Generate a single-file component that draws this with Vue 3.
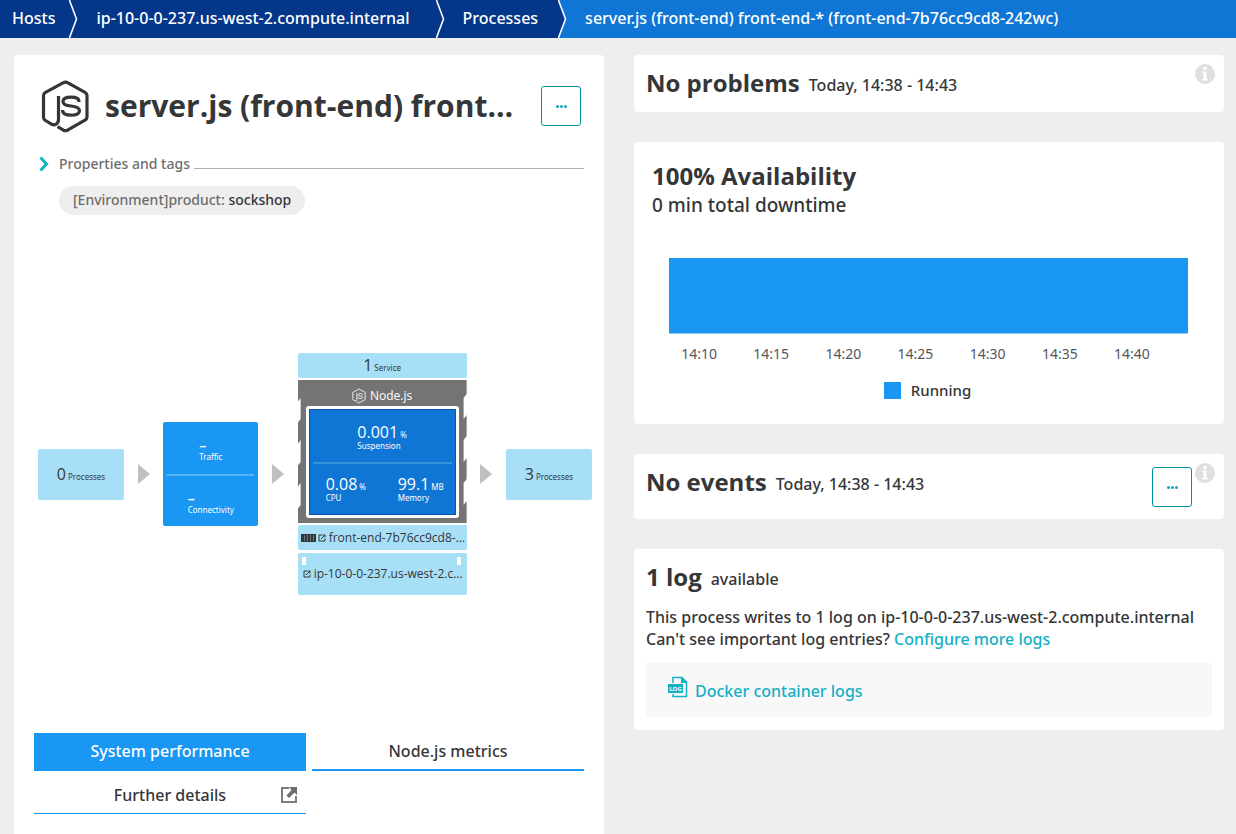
<script setup>
const crumbs = ['Hosts', 'ip-10-0-0-237.us-west-2.compute.internal', 'Processes']
const current = 'server.js (front-end) front-end-* (front-end-7b76cc9cd8-242wc)'
const ticks = ['14:10', '14:15', '14:20', '14:25', '14:30', '14:35', '14:40']
</script>

<template>
  <div class="page">
    <nav class="crumbs" aria-label="Breadcrumb">
      <a v-for="c in crumbs" :key="c" class="crumb" href="#">
        <span class="crumb-text">{{ c }}</span>
        <svg class="sep" width="9" height="38" viewBox="0 0 9 38">
          <path d="M0 0L8 19L0 38H9V0Z" class="sep-next" />
          <path d="M0 -1L7.500 19L0 39" fill="none" stroke="#fff" stroke-width="1.600" />
        </svg>
      </a>
      <span class="crumb-current" aria-current="page">{{ current }}</span>
    </nav>

    <main class="columns">
      <section class="panel">
        <header class="title-row">
          <svg class="logo" width="50" height="54" viewBox="0 0 50 54" fill="none" stroke="#353638" stroke-linejoin="round">
            <path d="M17.500 17V40.500Q17.500 44 14.500 45.500Q12.500 46.300 10 44.800L4.500 41.500Q2.500 40.500 2.500 38.500V16.500Q2.500 14.500 4.500 13.300L22 3.800Q24.500 2.500 27 3.800L44 13.300Q46 14.500 46 16.500V38Q46 40 44 41.200L26.500 51.200Q24.500 52.200 22.500 51.200L16.500 47.600" stroke-width="3.200" />
            <path d="M38 23V22.500Q38 18.200 30 18.200Q22 18.200 22 22.500Q22 26.300 30 27Q38.500 27.800 38.500 31.800Q38.500 36.200 30 36.200Q21.500 36.200 21.500 31" stroke-width="3.200" />
          </svg>
          <h1>server.js (front-end) front-end-* (front-end-7b76cc9cd8-242wc)</h1>
          <button class="more" type="button" aria-label="More actions"><i></i><i></i><i></i></button>
        </header>

        <button class="props" type="button">
          <svg width="10" height="16" viewBox="0 0 10 16"><path d="M1.500 1.500L7.500 8L1.500 14.500" fill="none" stroke="#14b0c4" stroke-width="3" /></svg>
          <span>Properties and tags</span>
          <i class="rule"></i>
        </button>
        <div class="tag"><span>[Environment]product: </span>sockshop</div>

        <div class="flow">
          <a class="node side" href="#"><b>0</b> Processes</a>
          <i class="arrow"></i>
          <div class="node traffic">
            <div class="cell"><span class="dash">–</span><span>Traffic</span></div>
            <div class="cell"><span class="dash">–</span><span>Connectivity</span></div>
          </div>
          <i class="arrow"></i>
          <div class="stack">
            <a class="node service" href="#"><b>1</b> Service</a>
            <div class="process">
              <div class="tech">
                <svg width="14" height="16" viewBox="0 0 50 54" fill="none" stroke="#fff" stroke-width="3">
                  <path d="M17.500 17V42L14 46L3 40V14L25 2L47 14V40L25 52L17 48" />
                  <path d="M38 23V22.500Q38 18.200 30 18.200Q22 18.200 22 22.500Q22 26.300 30 27Q38.500 27.800 38.500 31.800Q38.500 36.200 30 36.200Q21.500 36.200 21.500 31" />
                </svg>
                <span>Node.js</span>
              </div>
              <div class="metrics">
                <div class="metric top"><div><b>0.001</b> %<span>Suspension</span></div></div>
                <div class="metric pair">
                  <div><b>0.08</b> %<span>CPU</span></div>
                  <div><b>99.1</b> MB<span>Memory</span></div>
                </div>
              </div>
            </div>
            <a class="node container" href="#">
              <svg width="15" height="8" viewBox="0 0 15 8"><path d="M0 0H15V8H0Z" fill="#353638" /><path d="M3.500 1V7M6.500 1V7M9.500 1V7M12.500 1V7" stroke="#a7dff6" stroke-width=".4" /></svg>
              <svg class="ext" width="8" height="8" viewBox="0 0 16 16"><path d="M8 2H2V14H14V9M9 2H14V7M14 2L6 10" /></svg>
              <span>front-end-7b76cc9cd8-242wc</span>
            </a>
            <a class="node host" href="#">
              <svg class="ext" width="8" height="8" viewBox="0 0 16 16"><path d="M8 2H2V14H14V9M9 2H14V7M14 2L6 10" /></svg>
              <span>ip-10-0-0-237.us-west-2.compute.internal</span>
            </a>
          </div>
          <i class="arrow"></i>
          <a class="node side" href="#"><b>3</b> Processes</a>
        </div>

        <div class="tabs">
          <button class="tab active" type="button">System performance</button>
          <button class="tab" type="button">Node.js metrics</button>
          <a class="tab link" href="#">
            <span>Further details</span>
            <svg width="16" height="16" viewBox="0 0 16 16"><path d="M8 1H1V15H15V9" fill="none" stroke="#7d7d7d" stroke-width="2" /><path d="M8 0H16V8L13.500 5.500L8 11L5.500 8.500L10.500 3Z" fill="#6d6d6d" /></svg>
          </a>
        </div>
      </section>

      <div class="side-col">
        <section class="card line">
          <h2>No problems</h2><span class="sub">Today, 14:38 - 14:43</span>
          <button class="info" type="button" aria-label="Information">
            <svg width="20" height="20" viewBox="0 0 20 20"><circle cx="10" cy="10" r="10" fill="#dfdfdf" /><circle cx="10" cy="4.500" r="1.700" fill="#fff" /><path d="M7.500 7.500H11.500V15H13V16.500H7V15H8.500V9H7.500Z" fill="#fff" /></svg>
          </button>
        </section>

        <section class="card availability">
          <h2>100% Availability</h2>
          <p class="downtime">0 min total downtime</p>
          <div class="bar"></div>
          <div class="axis"><span v-for="t in ticks" :key="t">{{ t }}</span></div>
          <div class="legend"><i></i>Running</div>
        </section>

        <section class="card line events">
          <h2>No events</h2><span class="sub">Today, 14:38 - 14:43</span>
          <button class="more" type="button" aria-label="More event actions"><i></i><i></i><i></i></button>
          <button class="info" type="button" aria-label="Information">
            <svg width="20" height="20" viewBox="0 0 20 20"><circle cx="10" cy="10" r="10" fill="#dfdfdf" /><circle cx="10" cy="4.500" r="1.700" fill="#fff" /><path d="M7.500 7.500H11.500V15H13V16.500H7V15H8.500V9H7.500Z" fill="#fff" /></svg>
          </button>
        </section>

        <section class="card logs">
          <div class="log-head"><h2>1 log</h2><span class="sub">available</span></div>
          <p class="log-text">This process writes to 1 log on ip-10-0-0-237.us-west-2.compute.internal<br />Can't see important log entries? <a href="#">Configure more logs</a></p>
          <div class="log-list">
            <svg width="20" height="22" viewBox="0 0 20 22">
              <path d="M5 7V1.500H14L18.500 6V20.500H5V18" fill="none" stroke="#14b0c4" stroke-width="1.500" />
              <path d="M13 1V7H19Z" fill="#14b0c4" />
              <rect x="0" y="8" width="15" height="9" fill="#14b0c4" />
              <text x="7.500" y="15" text-anchor="middle">LOG</text>
            </svg>
            <a href="#">Docker container logs</a>
          </div>
        </section>
      </div>
    </main>
  </div>
</template>

<style>
body { background: #eee; }
</style>

<style scoped>
* { box-sizing: border-box; }
.page {
  min-height: 100vh;
  display: flex;
  flex-direction: column;
  font-family: "Noto Sans", "Open Sans", sans-serif;
  font-size: 16px;
  font-weight: 500;
  line-height: 22px;
  color: #353638;
}
a { color: #14b0c4; text-decoration: none; }
button { font: inherit; color: inherit; background: none; border: 0; padding: 0; cursor: pointer; }
h1, h2, p { margin: 0; }
svg { flex: none; display: block; }

.crumbs { display: flex; height: 38px; background: #0f76d5; color: #fff; line-height: 36px; white-space: nowrap; overflow: hidden; }
.crumb { display: flex; background: #04378a; color: #fff; }
.crumb-text { padding: 0 20px 0 18px; }
.crumb:first-child .crumb-text { padding: 0 14px 0 12px; }
.crumb:nth-child(2) .crumb-text { padding-right: 26px; }
.sep-next { fill: #04378a; }
.crumb:nth-child(3) .sep-next { fill: #0f76d5; }
.crumb-current { padding-left: 18px; }

.columns { flex: 1; display: grid; grid-template-columns: minmax(0, 1fr) minmax(0, 1fr); gap: 30px; padding: 17px 12px 0 14px; }
.panel { background: #fff; border-radius: 4px 4px 0 0; padding-bottom: 20px; }
.title-row { display: flex; align-items: center; padding: 24px 23px 0 27px; height: 78px; }
.title-row h1 { flex: 1; min-width: 0; margin: 0 24px 0 14px; font-family: "Open Sans", sans-serif; font-size: 30px; line-height: 40px; font-weight: 700; white-space: nowrap; overflow: hidden; text-overflow: ellipsis; }
.more { flex: none; width: 40px; height: 40px; border: 1px solid #0093a5; border-radius: 3px; display: flex; align-items: center; justify-content: center; gap: 1px; }
.more i { width: 3px; height: 3px; border-radius: 2px; background: #14a5b8; }
.props { display: flex; align-items: center; width: calc(100% - 45px); margin: 20px 20px 0 25px; height: 22px; font-size: 14px; color: #6d6d6d; }
.props span { margin: 0 4px 0 10px; }
.rule { flex: 1; height: 1px; background: #b0b0b0; margin-top: 8px; }
.tag { width: fit-content; margin: 11px 0 0 45px; padding: 0 14px; height: 29px; line-height: 28px; border-radius: 15px; background: #eee; font-size: 14px; }
.tag span { color: #6d6d6d; white-space: pre; }

.flow { display: flex; align-items: center; justify-content: space-between; padding: 0 12px 0 24px; margin-top: 138px; font-family: "Noto Sans", sans-serif; font-size: 8px; line-height: 12px; font-weight: 400; }
.flow b { font-family: "Open Sans", sans-serif; font-weight: 400; font-size: 16px; line-height: 16px; }
.node { background: #a7dff6; border-radius: 2px; color: #353638; }
.flow .side, .flow .service { display: flex; align-items: baseline; justify-content: center; gap: 2px; }
.flow .side { width: 86px; height: 51px; line-height: 51px; }
.flow .service { height: 25px; line-height: 25px; }
.flow .side b, .flow .service b { line-height: inherit; }
.arrow { width: 0; height: 0; border-left: 12px solid #c0c0c0; border-top: 10px solid transparent; border-bottom: 10px solid transparent; }
.traffic { width: 95px; height: 104px; background: #1a96f3; color: #fff; padding: 0 4px; }
.cell { height: 52px; display: grid; align-content: center; justify-content: center; padding-top: 6px; }
.cell + .cell { border-top: 2px solid #58b6f6; }
.dash { font-size: 14px; font-weight: 600; line-height: 12px; }
.stack { width: 169px; display: grid; gap: 2px; }
.process {
  padding: 0 8px 5px;
  background: #747474;
  clip-path: polygon(0 0, 100% 0, 100% 14px, calc(100% - 3px) 18px, calc(100% - 3px) 39px, 100% 35px, 100% 56px, calc(100% - 3px) 60px, calc(100% - 3px) 82px, 100% 78px, 100% 99px, calc(100% - 3px) 103px, calc(100% - 3px) 125px, 100% 121px, 100% 100%, 0 100%, 0 129px, 3px 125px, 3px 103px, 0 107px, 0 86px, 3px 82px, 3px 60px, 0 64px, 0 43px, 3px 39px, 3px 18px, 0 22px);
}
.tech { height: 26px; padding-top: 6px; display: flex; align-items: center; justify-content: center; gap: 4px; color: #fff; font-family: "Open Sans", sans-serif; font-size: 12px; }
.metrics { border: 3px solid #fff; border-radius: 3px; background: #0f76d5; color: #fff; padding: 0 4px; height: 112px; box-shadow: inset 0 0 0 1px #0a55ae; }
.metric { height: 53px; display: flex; padding-top: 15px; }
.metric div { white-space: nowrap; }
.metric span { display: block; line-height: 10px; }
.top { justify-content: center; }
.pair { border-top: 2px solid #3593de; display: grid; grid-template-columns: 72px 1fr; padding: 12px 0 0 13px; }
.container, .host { display: flex; align-items: center; gap: 2px; padding: 0 3px; font-family: "Open Sans", sans-serif; font-size: 12px; min-width: 0; }
.container { height: 25px; padding-right: 0; }
.host { height: 42px; margin-top: 1px; padding-left: 5px; background: linear-gradient(#fff, #fff) 4px 4px / 4px 8px no-repeat, linear-gradient(#fff, #fff) 159px 4px / 4px 8px no-repeat, #a7dff6; }
.container span, .host span { flex: 1; min-width: 0; margin-left: 1px; overflow: hidden; white-space: nowrap; text-overflow: ellipsis; line-height: 18px; }
.ext { fill: none; stroke: #353638; stroke-width: 2; }

.tabs { display: grid; grid-template-columns: 1fr 1fr; gap: 6px; padding: 0 20px; margin-top: 138px; }
.tab { height: 38px; border-bottom: 2px solid #1a96f3; text-align: center; }
.active { background: #1a96f3; color: #fff; }
.link { display: grid; grid-template-columns: 1fr 16px; align-items: center; height: 37px; padding: 0 9px 0 25px; border-bottom: 1px solid #1a96f3; color: #353638; }

.side-col { display: flex; flex-direction: column; gap: 30px; }
.card { background: #fff; border-radius: 4px; }
h2 { font-family: "Open Sans", sans-serif; font-size: 24px; line-height: 32px; font-weight: 700; }
.line { position: relative; display: flex; align-items: center; padding: 12px 12px 13px; }
.sub { margin: 3px 0 0 9px; }
.info { position: absolute; top: 9px; right: 9px; }
.events { padding-bottom: 21px; }
.events .more { position: absolute; top: 13px; right: 32px; }
.availability { padding: 18px 36px 23px 18px; }
.downtime { font-size: 19px; line-height: 26px; }
.bar { height: 76px; margin: 40px 0 0 17px; background: #1a96f3; border-bottom: 1px solid #8cccf8; }
.axis { display: grid; grid-template-columns: repeat(7, 1fr); margin: 9px 20px 0 11px; font-size: 14px; font-weight: 400; text-align: center; color: #55565a; }
.legend { display: flex; align-items: center; justify-content: center; gap: 10px; margin: 14px 0 0 15px; font-size: 15px; }
.legend i { width: 17px; height: 17px; background: #1a96f3; }
.logs { padding: 12px 12px 13px; }
.log-head { display: flex; align-items: center; }
.log-text { margin-top: 13px; }
.log-list { display: flex; align-items: center; gap: 7px; margin-top: 13px; height: 54px; padding: 2px 0 0 22px; background: #f8f8f8; }
.log-list svg { margin-bottom: 8px; }
.log-list text { font: 700 6px "Open Sans", sans-serif; fill: #fff; }
</style>
